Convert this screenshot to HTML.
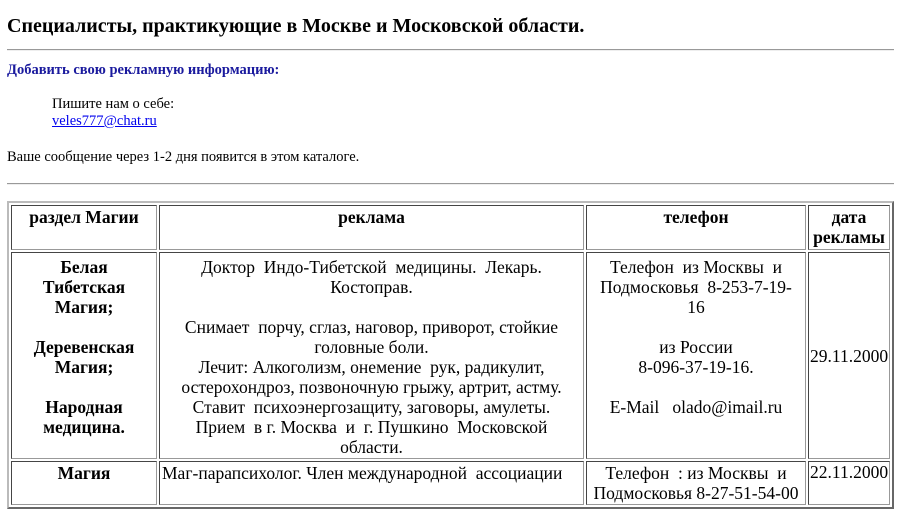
<!DOCTYPE html>
<html><head><meta charset="utf-8"><style>
body{margin:0;padding:0 6px 0 7px;font-family:"Liberation Serif","DejaVu Serif",serif;background:#fff;color:#000;width:887px;overflow:hidden;height:490px}
h1{font-size:20px;margin:0;padding-top:14px;line-height:24px;white-space:nowrap}
hr{border:0;border-top:1px solid #999;border-bottom:1px solid #eee;margin:11px 0 0 0}
.add{color:#1a1a9e;font-weight:bold;font-size:14.5px;margin-top:11px}
.ind{margin:17px 0 0 45px;font-size:14.5px;line-height:17px}
a{color:#00e}
p{font-size:14.5px;margin:19px 0 0 0}
table{border:2px outset #bbb;border-spacing:2px;margin-top:16px;width:887px;font-size:17.5px;line-height:20px;table-layout:fixed}
td,th{border:1px inset #999;padding:1px 2px;vertical-align:top;text-align:center;white-space:nowrap;overflow:hidden}
th{height:41px}
</style></head><body>
<h1>Специалисты, практикующие в Москве и Московской области.</h1>
<hr>
<div class="add">Добавить свою рекламную информацию:</div>
<div class="ind">Пишите нам о себе:<br><a href="#">veles777@chat.ru</a></div>
<p>Ваше сообщение через 1-2 дня появится в этом каталоге.</p>
<hr style="margin-top:17px">
<table>
<col style="width:146px"><col style="width:425px"><col style="width:220px"><col>
<tr><th>раздел Магии</th><th>реклама</th><th>телефон</th><th>дата<br>рекламы</th></tr>
<tr><td style="font-weight:bold;padding-top:4px">Белая<br>Тибетская<br>Магия;<br><br>Деревенская<br>Магия;<br><br>Народная<br>медицина.</td>
<td style="padding-top:4px">Доктор&nbsp; Индо-Тибетской&nbsp; медицины.&nbsp; Лекарь.<br>Костоправ.<br><br>Снимает&nbsp; порчу, сглаз, наговор, приворот, стойкие<br>головные боли.<br>Лечит: Алкоголизм, онемение&nbsp; рук, радикулит,<br>остерохондроз, позвоночную грыжу, артрит, астму.<br>Ставит&nbsp; психоэнергозащиту, заговоры, амулеты.<br>Прием&nbsp; в г. Москва&nbsp; и&nbsp; г. Пушкино&nbsp; Московской<br>области.</td>
<td style="padding-top:4px">Телефон&nbsp; из Москвы&nbsp; и<br>Подмосковья&nbsp; 8-253-7-19-<br>16<br><br>из России<br>8-096-37-19-16.<br><br>E-Mail&nbsp;&nbsp; olado@imail.ru</td>
<td style="vertical-align:middle;padding:0 1px">29.11.2000</td></tr>
<tr><td style="font-weight:bold">Магия</td><td style="text-align:left">Маг-парапсихолог. Член международной&nbsp; ассоциации</td><td>Телефон&nbsp; : из Москвы&nbsp; и<br>Подмосковья 8-27-51-54-00</td><td style="padding:0 1px">22.11.2000</td></tr>
</table>
</body></html>
